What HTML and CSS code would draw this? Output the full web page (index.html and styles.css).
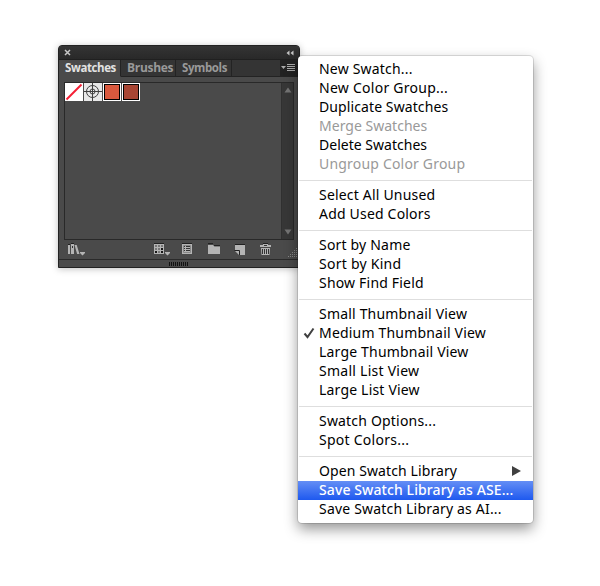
FILE: index.html
```html
<!DOCTYPE html>
<html lang="en">
<head>
<meta charset="utf-8">
<title>Swatches</title>
<link rel="stylesheet" href="styles.css">
</head>
<body>
<main class="desktop">
  <section class="panel">
    <header class="titlebar">
      <svg width="7" height="7" viewBox="0 0 7 7"><path d="M1 1l5 5M6 1L1 6" stroke="#c8c8c8" stroke-width="1.5"/></svg>
      <svg width="8" height="6" viewBox="0 0 8 6"><path d="M3.5 .5v5L.5 3zM7.5 .5v5L4.5 3z" fill="#c4c4c4"/></svg>
    </header>
    <nav class="tabs">
      <span class="tab tab-swatches active">Swatches</span>
      <span class="tab tab-brushes">Brushes</span>
      <span class="tab tab-symbols">Symbols</span>
      <span class="options"><svg width="16" height="10" viewBox="0 0 16 10"><path d="M1 3h5L3.500 6z" fill="#aaa"/><path d="M7 1.500h8M7 3.500h8M7 5.500h8M7 7.500h8" stroke="#aaa"/></svg></span>
    </nav>
    <div class="list">
      <div class="swatches">
        <span class="swatch"><svg width="18" height="18" viewBox="0 0 18 18"><path d="M1.500 16.500l15-15" stroke="#f51f35" stroke-width="2"/></svg></span>
        <span class="swatch reg"><svg width="18" height="18" viewBox="0 0 18 18" fill="none" stroke="#404040"><circle cx="8.500" cy="8.500" r="6"/><circle cx="8.500" cy="8.500" r="2.500"/><path d="M8.500 0v18M0 8.500h18"/></svg></span>
        <span class="swatch"><i class="chip orange"></i></span>
        <span class="swatch"><i class="chip rust"></i></span>
      </div>
      <div class="scroll">
        <svg width="8" height="6" viewBox="0 0 8 6"><path d="M.5 5.500h7L4 .5z" fill="#747474"/></svg>
        <svg width="8" height="6" viewBox="0 0 8 6"><path d="M.5 .5h7L4 5.500z" fill="#747474"/></svg>
      </div>
    </div>
    <footer class="tools">
      <svg width="240" height="19" viewBox="59 240 240 19">
        <g fill="#b4b4b4">
          <path d="M68 245h2v9h-2zM71 244h3v10h-3zM74.500 245h2.200l2.800 9h-2.400zM80 252h5v1l-2.500 2.500L80 253z"/>
          <path d="M154 244h10v10h-10zM165 252h5v1l-2.500 2.500L165 253z"/>
          <path d="M182 244h10v10h-10z"/>
          <path d="M208 245h5l1.500 1.500h5.500V254h-12z"/>
          <path d="M235 245h10v10h-5v-4h-5z"/><path d="M235 251h4v4z"/>
          <path d="M260 247h11v-2h-3v-1h-5v1h-3zM261 248h9l-.5 7h-8z"/>
        </g>
        <path d="M68 244.500h2M71 243.500h3M154 243.500h10M182 243.500h10M208 243.500h5M214 245.500h6M235 244.500h10M263 243.500h5" stroke="#222" fill="none"/>
        <path d="M72.500 246v2" stroke="#333"/>
        <g fill="#777"><path d="M155 245h2v2h-2zM158 245h2v2h-2z"/><path d="M161 245h2v2h-2zM155 248h2v2h-2zM158 248h2v2h-2zM158 251h2v2h-2z"/><path fill="#181818" d="M161 248h2v2h-2zM155 251h2v2h-2zM161 251h2v2h-2z"/></g>
        <path d="M183.500 245.500h7v7h-7z" stroke="#888" fill="none"/>
        <path d="M184 246.500h1M186 246.500h4M184 248.500h1M186 248.500h4M184 250.500h1M186 250.500h4" stroke="#333"/>
        <path d="M234.500 250.500h5v4.500" stroke="#222" fill="none"/>
        <path d="M262.500 249v5M264.500 249v5M266.500 249v5M268.500 249v5M264 245.500h3" stroke="#333"/>
        <g stroke="#888" stroke-dasharray="1 1"><path d="M296 248.500h2M294 250.500h4M292 252.500h6M290 254.500h8M288 256.500h10"/></g>
      </svg>
    </footer>
    <div class="grip"><i></i></div>
  </section>

  <div class="menu">
    <div class="item">New Swatch...</div>
    <div class="item wide">New Color Group...</div>
    <div class="item snug">Duplicate Swatches</div>
    <div class="item disabled tight">Merge Swatches</div>
    <div class="item tight">Delete Swatches</div>
    <div class="item disabled">Ungroup Color Group</div>
    <div class="rule"></div>
    <div class="item">Select All Unused</div>
    <div class="item">Add Used Colors</div>
    <div class="rule"></div>
    <div class="item">Sort by Name</div>
    <div class="item wide">Sort by Kind</div>
    <div class="item">Show Find Field</div>
    <div class="rule"></div>
    <div class="item">Small Thumbnail View</div>
    <div class="item"><svg class="check" width="12" height="12" viewBox="0 0 12 12"><path d="M1.500 6.500L4.500 10 10.500 1.500" fill="none" stroke="#404040" stroke-width="2"/></svg>Medium Thumbnail View</div>
    <div class="item">Large Thumbnail View</div>
    <div class="item wide">Small List View</div>
    <div class="item">Large List View</div>
    <div class="rule"></div>
    <div class="item">Swatch Options...</div>
    <div class="item wide">Spot Colors...</div>
    <div class="rule"></div>
    <div class="item snug">Open Swatch Library<svg class="arrow" width="9" height="10" viewBox="0 0 9 10"><path d="M0 0l9 5-9 5z" fill="#404040"/></svg></div>
    <div class="item selected snug">Save Swatch Library as ASE...</div>
    <div class="item">Save Swatch Library as AI...</div>
  </div>
</main>
</body>
</html>
```
FILE: styles.css
```css
* { box-sizing: border-box; }
body { margin: 0; background: #fff; }
svg { display: block; }
.desktop { position: relative; width: 600px; height: 586px; overflow: hidden; }

.panel {
  position: absolute; left: 58px; top: 45px; width: 242px; height: 223px;
  display: flex; flex-direction: column;
  background: #4a4a4a; border: 1px solid #222; border-radius: 4px 4px 0 0;
  box-shadow: 0 1px 7px rgba(0, 0, 0, .25);
}
.titlebar {
  height: 13px; padding: 0 5px 0; flex: none;
  display: flex; align-items: center; justify-content: space-between;
  background: linear-gradient(#343434, #292929); border-radius: 3px 3px 0 0;
}
.tabs {
  height: 18px; flex: none; display: flex;
  background: #343434; border-top: 1px solid #202020;
  font: bold 12px/16px "Open Sans", "Noto Sans", sans-serif;
}
.tab {
  flex: none; padding-left: 6px; color: #999;
  border-right: 1px solid #232323; border-bottom: 1px solid #232323;
}
.tab.active { color: #e2e2e2; background: #4a4a4a; border-bottom-color: #4a4a4a; }
.tab-swatches { width: 62px; letter-spacing: -.55px; }
.tab-brushes { width: 55px; letter-spacing: -.3px; }
.tab-symbols { width: 56px; letter-spacing: -.45px; }
.tab-swatches, .tab-symbols { font-size: 11.500px; letter-spacing: -.4px; }
.options {
  flex: 1; padding: 3px 0 0 48px; border-bottom: 1px solid #232323;
  background: linear-gradient(90deg, #343434 48px, #222 48px);
}
.list {
  height: 158px; margin: 5px 5px 0; flex: none; width: 230px;
  display: flex; justify-content: space-between; border: 1px solid #292929;
}
.swatches { display: flex; gap: 1px; }
.swatch { width: 18px; height: 18px; background: #fff; }
.swatch.reg { background: #e8e8e8; }
.chip { display: block; width: 16px; height: 16px; margin: 1px; border: 1px solid #000; }
.swatch:has(.chip) { padding-top: 1px; }
.swatch .chip { margin-top: 0; }
.orange { background: #d9593e; }
.rust { background: #a84533; }
.scroll {
  width: 12px; padding: 4px 2px; background: #373737; border-left: 1px solid #303030;
  display: flex; flex-direction: column; justify-content: space-between;
}
.tools { height: 19px; flex: none; }
.grip { flex: 1; display: flex; justify-content: center; padding-top: 2px; border-top: 1px solid #2a2a2a; }
.grip i { width: 20px; height: 4px; background: repeating-linear-gradient(90deg, #111 0 1px, #4a4a4a 1px 2px); }

.menu {
  position: absolute; left: 298px; top: 56px; width: 235px; height: 467px;
  padding-top: 4px; background: #fff; border-radius: 4px;
  box-shadow: 0 0 0 1px rgba(0, 0, 0, .12), 0 6px 14px rgba(0, 0, 0, .42);
  font: 14px/17px "Noto Sans", sans-serif; color: #000;
}
.item { position: relative; height: 19px; padding-left: 21px; white-space: nowrap; letter-spacing: .19px; }
.wide { letter-spacing: .26px; }
.snug { letter-spacing: .1px; }
.tight { letter-spacing: .02px; }
.disabled { color: #999; }
.selected { color: #fff; font-weight: 500; background: linear-gradient(#648ef5, #1e59ef); }
.rule { height: 12px; padding-top: 6px; }
.rule::before { content: ""; display: block; height: 1px; margin: 0 1px; background: #dedede; }
.check { position: absolute; left: 5px; top: 3px; }
.arrow { position: absolute; right: 12px; top: 4px; }
```
